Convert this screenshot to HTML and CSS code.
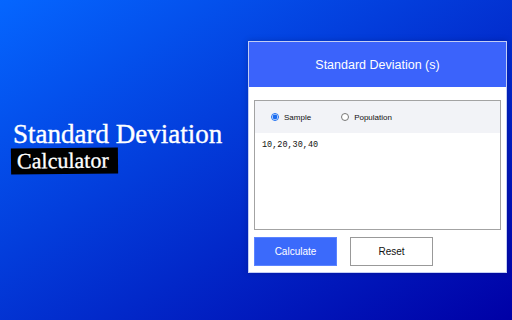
FILE: index.html
```html
<!DOCTYPE html>
<html lang="en">
<head>
  <meta charset="UTF-8">
  <title>Standard Deviation Calculator</title>
  <link rel="stylesheet" href="styles.css">
</head>
<body>

  <div class="page">
    <div class="intro">
      <h1 class="intro-title">Standard Deviation</h1>
      <span class="intro-tag">Calculator</span>
    </div>

    <div class="panel">
      <div class="panel-head">Standard Deviation (s)</div>
      <div class="panel-body">
        <div class="input-box">
          <div class="mode-row">
            <label class="mode"><input type="radio" name="mode" checked> Sample</label>
            <label class="mode"><input type="radio" name="mode"> Population</label>
          </div>
          <textarea class="values">10,20,30,40</textarea>
        </div>
        <div class="actions">
          <button class="btn btn-main">Calculate</button>
          <button class="btn btn-reset">Reset</button>
        </div>
      </div>
    </div>
  </div>

</body>
</html>
```

FILE: styles.css
```css
html, body { margin: 0; height: 100%; }
body {
  background: linear-gradient(to bottom right, #0566ff, #0000a6);
  font-family: "Liberation Sans", Arial, sans-serif;
  overflow: hidden;
}
.page { display: flex; align-items: flex-start; height: 320px; }

.intro { width: 237px; padding: 119px 0 0 11px; color: #fff; }
.intro-title {
  margin: 0 0 0 2px;
  font-family: "Liberation Serif", "Times New Roman", serif;
  font-weight: normal;
  font-size: 27px;
  line-height: 30px;
  white-space: nowrap;
  -webkit-text-stroke: 0.35px #fff;
}
.intro-tag {
  display: inline-block;
  margin-top: -1px;
  padding: 0 9px 0 6px;
  background: #000;
  font-family: "Liberation Serif", "Times New Roman", serif;
  font-size: 22px;
  line-height: 26px;
  transform: rotate(-0.6deg);
  -webkit-text-stroke: 0.3px #fff;
}

.panel {
  margin-top: 41px;
  width: 257px;
  border: 1px solid #c3cdf4;
  background: #fff;
  box-shadow: 0 0 6px rgba(0, 0, 60, 0.25);
}
.panel-head {
  height: 45px;
  line-height: 46px;
  background: #3b63fb;
  color: #fff;
  text-align: center;
  font-size: 12.5px;
}
.panel-body { padding: 13px 5px 6px 5px; }

.input-box { border: 1px solid #a3a3a3; }
.mode-row {
  display: flex;
  align-items: center;
  height: 32px;
  padding-left: 16px;
  background: #f2f3f7;
  font-size: 8px;
  color: #111;
}
.mode { display: flex; align-items: center; margin-right: 30px; }
.mode input {
  width: 8px;
  height: 8px;
  margin: 0 5px 0 0;
  accent-color: #1a6cf0;
}
.values {
  display: block;
  box-sizing: border-box;
  width: 100%;
  height: 96px;
  margin: 0;
  padding: 7px 7px;
  border: none;
  resize: none;
  outline: none;
  font-family: "Liberation Mono", "Courier New", monospace;
  font-size: 8.5px;
  line-height: 10px;
  color: #111;
}

.actions { display: flex; gap: 13px; margin-top: 7px; }
.btn {
  width: 83px;
  height: 29px;
  font-family: "Liberation Sans", Arial, sans-serif;
  font-size: 10px;
  cursor: pointer;
}
.btn-main { background: #3b6afb; border: 1px solid #5b84ff; color: #fff; }
.btn-reset { background: #fff; border: 1px solid #999; color: #111; }
```
